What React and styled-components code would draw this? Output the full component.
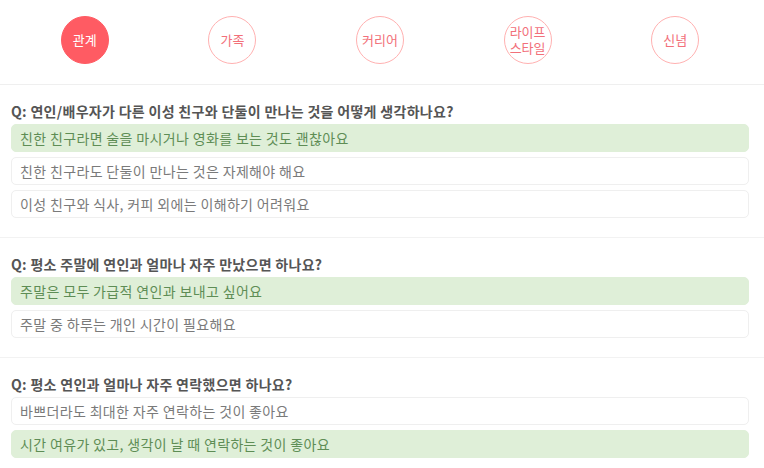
import React from "react";
import styled, { createGlobalStyle } from "styled-components";

const GlobalStyle = createGlobalStyle`
  * { box-sizing: border-box; }
  body {
    margin: 0;
    background: #fff;
    font-family: "Noto Sans CJK KR", "Noto Sans", sans-serif;
  }
`;

const categories = [
  { label: "관계", active: true },
  { label: "가족" },
  { label: "커리어" },
  { label: "라이프\n스타일" },
  { label: "신념" },
];

const questions = [
  {
    title: "Q: 연인/배우자가 다른 이성 친구와 단둘이 만나는 것을 어떻게 생각하나요?",
    answers: [
      { text: "친한 친구라면 술을 마시거나 영화를 보는 것도 괜찮아요", picked: true },
      { text: "친한 친구라도 단둘이 만나는 것은 자제해야 해요" },
      { text: "이성 친구와 식사, 커피 외에는 이해하기 어려워요" },
    ],
  },
  {
    title: "Q: 평소 주말에 연인과 얼마나 자주 만났으면 하나요?",
    answers: [
      { text: "주말은 모두 가급적 연인과 보내고 싶어요", picked: true },
      { text: "주말 중 하루는 개인 시간이 필요해요" },
    ],
  },
  {
    title: "Q: 평소 연인과 얼마나 자주 연락했으면 하나요?",
    answers: [
      { text: "바쁘더라도 최대한 자주 연락하는 것이 좋아요" },
      { text: "시간 여유가 있고, 생각이 날 때 연락하는 것이 좋아요", picked: true },
    ],
  },
];

const Page = styled.div`
  width: 764px;
`;

const CategoryBar = styled.nav`
  display: grid;
  grid-template-columns: repeat(5, 1fr);
  padding: 16px 15px 20px 11px;
  border-bottom: 1px solid #efefef;
`;

const CategoryCell = styled.div`
  display: flex;
  justify-content: center;
`;

const Circle = styled.div`
  width: 48px;
  height: 48px;
  border-radius: 50%;
  display: flex;
  align-items: center;
  justify-content: center;
  text-align: center;
  white-space: pre-line;
  font-size: 13px;
  line-height: 16px;
  border: 1px solid ${(p) => (p.$active ? "#ff5b63" : "#ffb1b1")};
  background: ${(p) => (p.$active ? "#ff5b63" : "#fff")};
  color: ${(p) => (p.$active ? "#fff" : "#f2707a")};
`;

const Section = styled.section`
  padding: 16px 15px 19px 11px;
  & + & {
    border-top: 1px solid #f2f2f2;
  }
`;

const Question = styled.h3`
  margin: 0 0 3px;
  font-size: 14px;
  line-height: 20px;
  font-weight: 700;
  color: #555;
  letter-spacing: 0.3px;
`;

const AnswerList = styled.div`
  display: flex;
  flex-direction: column;
  gap: 5px;
`;

const Answer = styled.div`
  height: 28px;
  padding: 0 8px;
  display: flex;
  align-items: center;
  border-radius: 5px;
  font-size: 14px;
  letter-spacing: 0.35px;
  border: 1px solid ${(p) => (p.$picked ? "#dfefd8" : "#efefef")};
  background: ${(p) => (p.$picked ? "#dfefd8" : "#fff")};
  color: ${(p) => (p.$picked ? "#5e8d55" : "#7a7a7a")};
`;

export default function App() {
  return (
    <Page>
      <GlobalStyle />
      <CategoryBar>
        {categories.map((c) => (
          <CategoryCell key={c.label}>
            <Circle $active={c.active}>{c.label}</Circle>
          </CategoryCell>
        ))}
      </CategoryBar>
      {questions.map((q) => (
        <Section key={q.title}>
          <Question>{q.title}</Question>
          <AnswerList>
            {q.answers.map((a) => (
              <Answer key={a.text} $picked={a.picked}>
                {a.text}
              </Answer>
            ))}
          </AnswerList>
        </Section>
      ))}
    </Page>
  );
}
